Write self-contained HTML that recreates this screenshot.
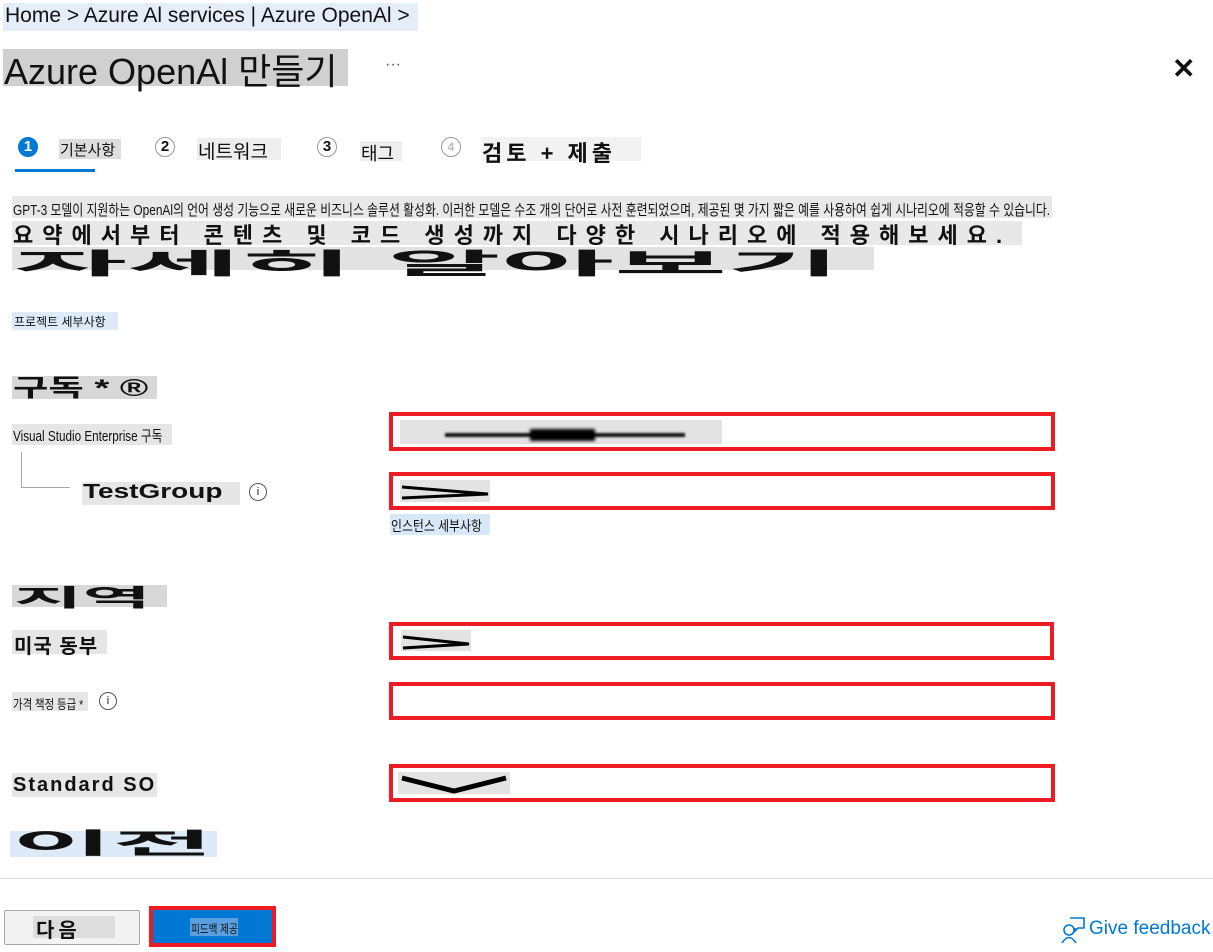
<!DOCTYPE html>
<html><head><meta charset="utf-8"><style>
body{margin:0;width:1213px;height:952px;background:#fff;position:relative;overflow:hidden;font-family:"Liberation Sans","Noto Sans CJK KR",sans-serif;color:#111}
.a{position:absolute;white-space:nowrap}
.box{position:absolute;border:4px solid #ed1c24;box-sizing:border-box;background:#fff}
.circ{position:absolute;width:20px;height:20px;border-radius:50%;border:1.5px solid #999;box-sizing:border-box;font-size:15px;font-weight:bold;text-align:center;line-height:18px}
.t{transform-origin:0 0;display:inline-block}
</style></head><body>
<div class="a" style="left:3px;top:3px;width:415px;height:28px;background:#e5eef8"></div>
<div class="a" style="left:5px;top:4px;font-size:21px;color:#111">Home &gt; Azure Al services | Azure OpenAl &gt;</div>
<div class="a" style="left:3px;top:49px;width:345px;height:37px;background:#d0d0d0"></div>
<div class="a" style="left:4px;top:43px;font-size:36px;color:#111">Azure OpenAl 만들기</div>
<div class="a" style="left:385px;top:56px;font-size:16px;color:#555">···</div>
<div class="a" style="left:1172px;top:52px;font-size:28px;font-weight:bold">✕</div>

<div class="circ" style="left:18px;top:137px;background:#0078d4;border-color:#0078d4;color:#fff">1</div>
<div class="a" style="left:15px;top:169px;width:80px;height:3px;background:#0078d4"></div>
<div class="a" style="left:59px;top:139px;width:62px;height:20px;background:#ddd"></div>
<div class="a" style="left:60px;top:139px;font-size:15px">기본사항</div>
<div class="circ" style="left:155px;top:137px">2</div>
<div class="a" style="left:197px;top:138px;width:84px;height:22px;background:#eee"></div>
<div class="a" style="left:198px;top:137px;font-size:19px">네트워크</div>
<div class="circ" style="left:317px;top:137px">3</div>
<div class="a" style="left:360px;top:141px;width:42px;height:20px;background:#eee"></div>
<div class="a" style="left:361px;top:140px;font-size:18px">태그</div>
<div class="circ" style="left:441px;top:137px;color:#bbb;font-size:12px">4</div>
<div class="a" style="left:481px;top:137px;width:160px;height:24px;background:#f2f2f2"></div>
<div class="a" style="left:482px;top:136px;font-size:22px;font-weight:bold;letter-spacing:4px">검토 + 제출</div>

<div class="a" style="left:12px;top:196px;width:1040px;height:22px;background:#e8e8e8"></div>
<div class="a" style="left:13px;top:199px;font-size:15px"><span class="t" style="transform:scaleX(0.79)">GPT-3 모델이 지원하는 OpenAl의 언어 생성 기능으로 새로운 비즈니스 솔루션 활성화. 이러한 모델은 수조 개의 단어로 사전 훈련되었으며, 제공된 몇 가지 짧은 예를 사용하여 쉽게 시나리오에 적응할 수 있습니다.</span></div>
<div class="a" style="left:12px;top:221px;width:1010px;height:24px;background:#e8e8e8"></div>
<div class="a" style="left:13px;top:218px;font-size:22px;font-weight:bold;letter-spacing:9px">요약에서부터 콘텐츠 및 코드 생성까지 다양한 시나리오에 적용해보세요.</div>
<div class="a" style="left:12px;top:247px;width:862px;height:23px;background:#e2e2e2"></div>
<div class="a" style="left:14px;top:240px;font-size:30px;font-weight:bold"><span class="t" style="transform:scale(4.1,0.95)">자세히 알아보기</span></div>

<div class="a" style="left:12px;top:312px;width:106px;height:18px;background:#ddeaf8"></div>
<div class="a" style="left:14px;top:313px;font-size:12px">프로젝트 세부사항</div>
<div class="a" style="left:12px;top:376px;width:145px;height:23px;background:#d8d8d8"></div>
<div class="a" style="left:13px;top:368px;font-size:24px;font-weight:bold"><span class="t" style="transform:scale(1.6,1)">구독 * ®</span></div>

<div class="a" style="left:12px;top:424px;width:160px;height:21px;background:#e6e6e6"></div>
<div class="a" style="left:13px;top:425px;font-size:15px"><span class="t" style="transform:scaleX(0.78)">Visual Studio Enterprise 구독</span></div>
<div class="a" style="left:21px;top:452px;width:1px;height:35px;background:#aaa"></div>
<div class="a" style="left:21px;top:487px;width:49px;height:1px;background:#aaa"></div>
<div class="a" style="left:82px;top:482px;width:158px;height:23px;background:#e6e6e6"></div>
<div class="a" style="left:83px;top:481px;font-size:20px;font-weight:bold"><span class="t" style="transform:scaleX(1.4)">TestGroup</span></div>
<div class="a" style="left:249px;top:483px;width:16px;height:16px;border:1px solid #555;border-radius:50%;font-size:11px;text-align:center;line-height:16px">i</div>

<div class="box" style="left:389px;top:412px;width:666px;height:39px"></div>
<div class="a" style="left:400px;top:420px;width:322px;height:24px;background:#e3e3e3"></div>
<div class="a" style="left:445px;top:433px;width:240px;height:4px;background:#111;filter:blur(1px)"></div>
<div class="a" style="left:530px;top:429px;width:65px;height:12px;background:#000;filter:blur(1.5px)"></div>
<div class="box" style="left:389px;top:472px;width:666px;height:38px"></div>
<div class="a" style="left:400px;top:480px;width:90px;height:22px;background:#e3e3e3"></div>
<svg class="a" style="left:400px;top:484px" width="90" height="16"><path d="M2 3 L88 10 L2 14" fill="none" stroke="#000" stroke-width="3"/></svg>
<div class="a" style="left:390px;top:514px;width:100px;height:21px;background:#d8e8f8"></div>
<div class="a" style="left:391px;top:516px;font-size:14px"><span class="t" style="transform:scaleX(0.85)">인스턴스 세부사항</span></div>

<div class="a" style="left:12px;top:585px;width:155px;height:22px;background:#d8d8d8"></div>
<div class="a" style="left:14px;top:578px;font-size:24px;font-weight:bold"><span class="t" style="transform:scale(3.1,1)">지역</span></div>
<div class="a" style="left:12px;top:630px;width:95px;height:24px;background:#e6e6e6"></div>
<div class="a" style="left:14px;top:630px;font-size:20px;font-weight:bold;letter-spacing:1px">미국 동부</div>
<div class="box" style="left:389px;top:622px;width:665px;height:38px"></div>
<div class="a" style="left:401px;top:630px;width:70px;height:21px;background:#e3e3e3"></div>
<svg class="a" style="left:401px;top:634px" width="70" height="16"><path d="M2 3 L68 10 L2 14" fill="none" stroke="#000" stroke-width="3"/></svg>
<div class="a" style="left:12px;top:692px;width:76px;height:19px;background:#e6e6e6"></div>
<div class="a" style="left:13px;top:694px;font-size:13px"><span class="t" style="transform:scaleX(0.8)">가격 책정 등급 *</span></div>
<div class="a" style="left:99px;top:692px;width:16px;height:16px;border:1px solid #555;border-radius:50%;font-size:11px;text-align:center;line-height:16px">i</div>
<div class="box" style="left:389px;top:682px;width:666px;height:38px"></div>
<div class="a" style="left:12px;top:773px;width:145px;height:24px;background:#e6e6e6"></div>
<div class="a" style="left:13px;top:774px;font-size:20px;font-weight:bold;letter-spacing:2px">Standard SO</div>
<div class="box" style="left:389px;top:764px;width:666px;height:38px"></div>
<div class="a" style="left:398px;top:772px;width:112px;height:22px;background:#e3e3e3"></div>
<svg class="a" style="left:398px;top:774px" width="112" height="20"><path d="M4 4 L56 17 L108 4" fill="none" stroke="#000" stroke-width="5"/></svg>

<div class="a" style="left:10px;top:831px;width:207px;height:26px;background:#ddeaf8"></div>
<div class="a" style="left:12px;top:822px;font-size:28px;font-weight:bold"><span class="t" style="transform:scale(3.9,1)">이전</span></div>
<div class="a" style="left:0;top:878px;width:1213px;height:1px;background:#ddd"></div>
<div class="a" style="left:4px;top:910px;width:136px;height:35px;background:#f3f3f3;border:1px solid #aaa;box-sizing:border-box;border-radius:2px"></div>
<div class="a" style="left:33px;top:916px;width:82px;height:22px;background:#ddd"></div>
<div class="a" style="left:36px;top:914px;font-size:20px;font-weight:bold;letter-spacing:4px">다음</div>
<div class="a" style="left:149px;top:906px;width:127px;height:41px;background:#0078d4;border:4px solid #ed1c24;box-sizing:border-box"></div>
<div class="a" style="left:190px;top:918px;width:48px;height:18px;background:#5aa0e0"></div>
<div class="a" style="left:191px;top:920px;font-size:12px"><span class="t" style="transform:scaleX(0.8)">피드백 제공</span></div>
<svg class="a" style="left:1060px;top:916px" width="26" height="28"><circle cx="9" cy="14" r="5" fill="none" stroke="#0078d4" stroke-width="1.6"/><path d="M2 27 Q9 16 16 27" fill="none" stroke="#0078d4" stroke-width="1.6"/><path d="M10 2 H24 V12 H18 L15 15 V12" fill="none" stroke="#0078d4" stroke-width="1.6"/></svg>
<div class="a" style="left:1089px;top:918px;font-size:19px;color:#0078d4">Give feedback</div>
</body></html>
